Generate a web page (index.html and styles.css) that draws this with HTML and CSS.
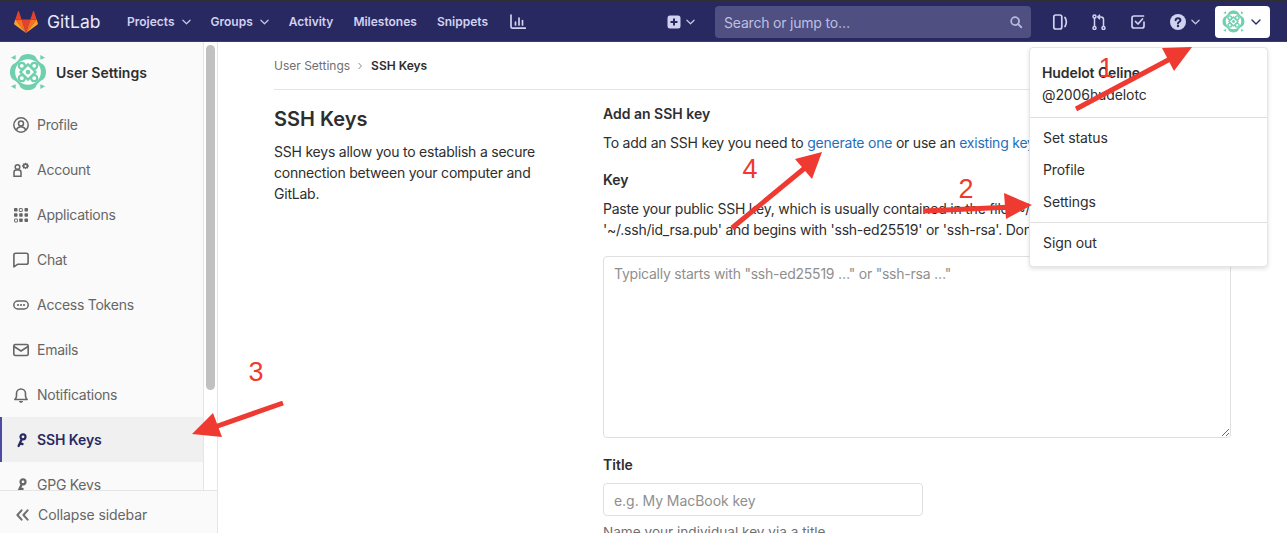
FILE: index.html
```html
<!DOCTYPE html>
<html lang="en">
<head>
<meta charset="utf-8">
<title>SSH Keys · User Settings · GitLab</title>
<link rel="stylesheet" href="styles.css">
</head>
<body>
<svg class="defs" width="0" height="0" aria-hidden="true">
  <symbol id="avatar" viewBox="0 0 40 40">
    <path fill="#6fd0ae" d="M12 4C16 0 24 0 28 4C29 7 33 11 36 12C40 16 40 24 36 28C33 29 29 33 28 36C24 40 16 40 12 36C11 33 7 29 4 28C0 24 0 16 4 12C7 11 11 7 12 4Z"/>
    <path fill="#6fd0ae" d="M2 5L7 2L7 7zM38 5L33 2L33 7zM2 35L7 38L7 33zM38 35L33 38L33 33z"/>
    <circle cx="20" cy="20" r="13.500" fill="#fff"/>
    <g fill="#fff" stroke="#6fd0ae" stroke-width="2.400">
      <path d="M20 12L28 20L20 28L12 20Z"/>
      <circle cx="13.500" cy="13.500" r="3.200"/><circle cx="26.500" cy="13.500" r="3.200"/><circle cx="13.500" cy="26.500" r="3.200"/><circle cx="26.500" cy="26.500" r="3.200"/>
    </g>
    <circle cx="20" cy="20" r="2.500" fill="#6fd0ae"/>
  </symbol>
  <symbol id="chev" viewBox="0 0 10 6"><path fill="none" stroke="currentColor" stroke-width="1.400" stroke-linecap="round" stroke-linejoin="round" d="M1 1l4 4 4-4"/></symbol>
  <symbol id="key" viewBox="0 0 16 16"><path fill="none" stroke="currentColor" stroke-width="2.300" stroke-linecap="round" d="M8.600 7.500L5.600 14M7 11.500L9.500 12"/><circle cx="10" cy="4.800" r="2.500" fill="none" stroke="currentColor" stroke-width="2.200"/></symbol>
</svg>

<header class="topbar">
  <a class="brand">
    <svg class="tanuki" viewBox="0 0 24 22" aria-hidden="true">
      <path fill="#e24329" d="M12 22l4.400-13.500H7.600z"/>
      <path fill="#fc6d26" d="M12 22L7.600 8.500H1.300z"/>
      <path fill="#fca326" d="M1.300 8.500L.1 12.600c-.1.400 0 .8.300 1L12 22z"/>
      <path fill="#e24329" d="M1.300 8.500h6.300L4.900.300c-.1-.4-.7-.4-.9 0z"/>
      <path fill="#fc6d26" d="M12 22l4.400-13.500h6.300z"/>
      <path fill="#fca326" d="M22.700 8.500l1.200 4.100c.1.400 0 .8-.3 1L12 22z"/>
      <path fill="#e24329" d="M22.700 8.500h-6.300L19.100.300c.1-.4.7-.4.900 0z"/>
    </svg>
    <span class="brand-name">GitLab</span>
  </a>
  <nav class="main-nav">
    <a class="nav-link">Projects <svg class="chev"><use href="#chev"/></svg></a>
    <a class="nav-link">Groups <svg class="chev"><use href="#chev"/></svg></a>
    <a class="nav-link">Activity</a>
    <a class="nav-link">Milestones</a>
    <a class="nav-link">Snippets</a>
    <svg class="nav-icon" viewBox="0 0 16 16" aria-hidden="true"><path fill="none" stroke="currentColor" stroke-width="1.700" stroke-linecap="round" stroke-linejoin="round" d="M1 1v11.700c0 1 .5 1.500 1.500 1.500h13M5.500 8v3M9 4v7M12.500 6.500V11"/></svg>
  </nav>
  <div class="top-right">
    <a class="new-btn">
      <svg class="nav-icon small" viewBox="0 0 14 14" aria-hidden="true"><rect width="13" height="13" x=".5" y=".5" rx="2.500" fill="currentColor"/><path stroke="#292961" stroke-width="2" d="M7 3.500v7M3.500 7h7"/></svg>
      <svg class="chev"><use href="#chev"/></svg>
    </a>
    <div class="search">
      <span>Search or jump to…</span>
      <svg class="search-icon" viewBox="0 0 16 16" aria-hidden="true"><circle cx="7" cy="7" r="4.500" fill="none" stroke="currentColor" stroke-width="2"/><path stroke="currentColor" stroke-width="2.200" stroke-linecap="round" d="M10.500 10.500L14 14"/></svg>
    </div>
    <svg class="tool-icon first" viewBox="0 0 16 16" aria-hidden="true"><rect x="1.800" y="1" width="8" height="14" rx="2" fill="none" stroke="currentColor" stroke-width="1.700"/><path fill="none" stroke="currentColor" stroke-width="1.700" stroke-linecap="round" d="M13 3.500c1.500 2.500 1.500 6.500 0 9"/></svg>
    <svg class="tool-icon" viewBox="0 0 16 16" aria-hidden="true"><g fill="none" stroke="currentColor" stroke-width="1.500"><circle cx="3.500" cy="2.500" r="1.500"/><circle cx="3.500" cy="14" r="1.500"/><circle cx="12.500" cy="14" r="1.500"/><path d="M3.500 4v8.500M12.500 12.500V5.500c0-1.500-1-2.500-2.500-2.500H7M9 .8L6.800 3 9 5.200"/></g></svg>
    <svg class="tool-icon" viewBox="0 0 16 16" aria-hidden="true"><path fill="none" stroke="currentColor" stroke-width="1.700" stroke-linecap="round" stroke-linejoin="round" d="M13.500 2H4C2.800 2 2 2.800 2 4v8c0 1.200.8 2 2 2h8c1.200 0 2-.8 2-2V8M5.500 7.500L8 10l4.500-5"/></svg>
    <a class="help">
      <svg class="help-icon" viewBox="0 0 16 16" aria-hidden="true"><circle cx="8" cy="8" r="8" fill="currentColor"/><path fill="none" stroke="#292961" stroke-width="2" stroke-linecap="round" d="M5.600 6.200C5.800 4.800 6.800 4.200 8 4.200c1.400 0 2.400.8 2.400 2 0 1.800-2.400 1.800-2.400 3.200"/><circle cx="8" cy="12" r="1.200" fill="#292961"/></svg>
      <svg class="chev"><use href="#chev"/></svg>
    </a>
    <a class="user-btn">
      <svg class="user-avatar"><use href="#avatar"/></svg>
      <svg class="chev dark"><use href="#chev"/></svg>
    </a>
  </div>
</header>

<div class="page">
  <aside class="sidebar">
    <div class="side-scroll">
      <div class="side-panel">
        <div class="context"><svg class="context-avatar"><use href="#avatar"/></svg><span>User Settings</span></div>
        <ul class="side-list">
          <li class="side-item"><svg class="side-icon" viewBox="0 0 16 16"><g fill="none" stroke="currentColor" stroke-width="1.500"><circle cx="8" cy="8" r="7.200"/><circle cx="8" cy="6.400" r="2.500"/><path d="M3.300 13c1-2.400 2.800-3.300 4.700-3.300s3.700.9 4.700 3.300"/></g></svg>Profile</li>
          <li class="side-item"><svg class="side-icon" viewBox="0 0 16 16"><g fill="none" stroke="currentColor" stroke-width="1.500"><circle cx="4.500" cy="5" r="2.300"/><path d="M1 14.200V10.500c0-1.500 1-2.500 2-2.500h3c1 0 2 1 2 2.500v3.700z"/></g><path fill="currentColor" fill-rule="evenodd" d="M12.500.5l1 1.100 1.500-.2.200 1.500 1.100 1-1.100 1-.2 1.500-1.500-.2-1 1.100-1-1.100-1.500.2-.2-1.500-1.100-1 1.100-1 .2-1.500 1.500.2zM12.500 3a1.100 1.100 0 1 0 0 2.200 1.100 1.100 0 0 0 0-2.200z"/></svg>Account</li>
          <li class="side-item"><svg class="side-icon" viewBox="0 0 16 16" fill="currentColor"><rect x="1" y="1" width="3.500" height="3.500" rx=".7"/><rect x="6.300" y="1.500" width="3" height="3" rx=".5" fill="none" stroke="currentColor"/><rect x="11.500" y="1" width="3.500" height="3.500" rx=".7"/><rect x="1" y="6.300" width="3.500" height="3.500" rx=".7"/><rect x="6.200" y="6.300" width="3.500" height="3.500" rx=".7"/><rect x="11.500" y="6.300" width="3.500" height="3.500" rx=".7"/><rect x="1.500" y="12" width="3" height="3" rx=".5" fill="none" stroke="currentColor"/><rect x="6.200" y="11.500" width="3.500" height="3.500" rx=".7"/><rect x="11.500" y="11.500" width="3.500" height="3.500" rx=".7"/></svg>Applications</li>
          <li class="side-item"><svg class="side-icon" viewBox="0 0 16 16"><path fill="none" stroke="currentColor" stroke-width="1.600" stroke-linejoin="round" d="M.9 14.800V3c0-1.100.7-1.800 1.800-1.800h10.600c1.100 0 1.800.7 1.800 1.800v7.500c0 1.100-.7 1.800-1.800 1.800H4.500z"/></svg>Chat</li>
          <li class="side-item"><svg class="side-icon" viewBox="0 0 16 16"><rect x=".8" y="4" width="14.400" height="8" rx="4" fill="none" stroke="currentColor" stroke-width="1.500"/><circle cx="5" cy="8" r="1.100" fill="currentColor"/><circle cx="8" cy="8" r="1.100" fill="currentColor"/><circle cx="11" cy="8" r="1.100" fill="currentColor"/></svg>Access Tokens</li>
          <li class="side-item"><svg class="side-icon" viewBox="0 0 16 16"><rect x=".8" y="2.500" width="14.400" height="11" rx="1.500" fill="none" stroke="currentColor" stroke-width="1.600"/><path fill="none" stroke="currentColor" stroke-width="1.600" d="M1 4.500l7 4.500 7-4.500"/></svg>Emails</li>
          <li class="side-item"><svg class="side-icon" viewBox="0 0 16 16"><path fill="none" stroke="currentColor" stroke-width="1.600" stroke-linejoin="round" d="M1.800 12.500h12.400c-1.200-1-1.700-2-1.700-3.500V6.500c0-2.500-2-4.500-4.500-4.500s-4.500 2-4.500 4.500V9c0 1.500-.5 2.500-1.700 3.500z"/><path fill="currentColor" d="M6 14h4c0 1-1 1.800-2 1.800S6 15 6 14z"/></svg>Notifications</li>
          <li class="side-item active"><svg class="side-icon"><use href="#key"/></svg>SSH Keys</li>
          <li class="side-item"><svg class="side-icon"><use href="#key"/></svg>GPG Keys</li>
        </ul>
      </div>
      <div class="scrollbar"><div class="thumb"></div></div>
    </div>
    <div class="collapse">
      <svg class="collapse-icon" viewBox="0 0 14 12" aria-hidden="true"><path fill="none" stroke="currentColor" stroke-width="2.200" stroke-linecap="round" stroke-linejoin="round" d="M6 1L1.500 6 6 11M12.500 1L8 6l4.500 5"/></svg>
      Collapse sidebar
    </div>
  </aside>

  <main class="content">
    <div class="crumbs">
      <a class="crumb">User Settings</a>
      <svg class="crumb-sep" viewBox="0 0 6 8" aria-hidden="true"><path fill="none" stroke="currentColor" d="M1.500 1l3 3-3 3"/></svg>
      <strong>SSH Keys</strong>
    </div>
    <div class="columns">
      <section class="intro">
        <h1>SSH Keys</h1>
        <p>SSH keys allow you to establish a secure connection between your computer and GitLab.</p>
      </section>
      <section class="form">
        <h2>Add an SSH key</h2>
        <p class="lead">To add an SSH key you need to <a>generate one</a> or use an <a>existing key</a>.</p>
        <label class="label key-label">Key</label>
        <p class="help-text">Paste your public SSH key, which is usually contained in the file '~/.ssh/id_ed25519.pub' or<br>'~/.ssh/id_rsa.pub' and begins with 'ssh-ed25519' or 'ssh-rsa'. Don't use your private SSH key.</p>
        <textarea class="key-box" placeholder="Typically starts with &quot;ssh-ed25519 …&quot; or &quot;ssh-rsa …&quot;"></textarea>
        <label class="label title-label">Title</label>
        <input class="title-box" type="text" placeholder="e.g. My MacBook key">
        <p class="hint">Name your individual key via a title</p>
      </section>
    </div>
  </main>
</div>

<div class="user-menu">
  <div class="menu-head"><strong>Hudelot Celine</strong><span>@2006hudelotc</span></div>
  <div class="menu-group">
    <a>Set status</a>
    <a>Profile</a>
    <a>Settings</a>
  </div>
  <div class="menu-group last"><a>Sign out</a></div>
</div>

<svg class="annotations" viewBox="0 0 1287 533" aria-hidden="true">
  <g fill="#ee3a31" stroke="#ee3a31" stroke-width="5">
    <path d="M1076 109L1172 58"/>
    <path stroke="none" d="M1192 47L1162 48L1174 71z"/>
    <path d="M924 211L1012 207"/>
    <path stroke="none" d="M1032 205L1004 193L1006 219z"/>
    <path d="M283 403L212 428"/>
    <path stroke="none" d="M192 434L213 413L222 437z"/>
    <path d="M732 228L806 167"/>
    <path stroke="none" d="M822 152L795 159L812 179z"/>
  </g>
  <g class="anno-num">
    <text x="1106" y="77" text-anchor="middle">1</text>
    <text x="966" y="198" text-anchor="middle">2</text>
    <text x="256" y="381" text-anchor="middle">3</text>
    <text x="750" y="178" text-anchor="middle">4</text>
  </g>
</svg>
</body>
</html>
```
FILE: styles.css
```css
* { box-sizing: border-box; }
html, body { margin: 0; height: 533px; overflow: hidden; }
body { font-family: Inter, "Liberation Sans", sans-serif; font-size: 14px; color: #2e2e2e; background: #fff; position: relative; }
a { text-decoration: none; color: inherit; }
ul { list-style: none; margin: 0; padding: 0; }
.defs { position: absolute; }

.topbar { height: 42px; background: #292961; border-top: 2px solid #2f2f33; border-bottom: 1px solid #3b3b6e; display: flex; align-items: center; color: #d1d1f0; }
.brand { display: flex; align-items: center; margin-left: 14px; width: 113px; }
.tanuki { width: 24px; height: 22px; }
.brand-name { margin-left: 9px; font-size: 17.500px; color: #e8e8f8; }
.main-nav { display: flex; align-items: center; gap: 20px; }
.nav-link { font-size: 12px; font-weight: 600; display: flex; align-items: center; gap: 7px; }
.chev { width: 9px; height: 6px; color: #c4c4e4; flex: none; }
.chev.dark { color: #292961; width: 10px; }
.nav-icon { width: 16px; height: 16px; margin-left: 2px; color: #d1d1f0; }
.nav-icon.small { width: 14px; height: 14px; margin: 0; }
.top-right { margin-left: auto; display: flex; align-items: center; margin-right: 17px; }
.new-btn { display: flex; align-items: center; gap: 5px; margin-right: 20px; }
.search { width: 316px; height: 32px; background: #4f4f82; border-radius: 4px; display: flex; align-items: center; justify-content: space-between; padding: 1px 8px 0 9px; font-size: 14px; color: #bfbfe0; letter-spacing: -.2px; }
.search-icon { width: 14px; height: 14px; color: #b8b8da; }
.tool-icon { width: 16px; height: 16px; margin-left: 23px; color: #d1d1f0; }
.tool-icon.first { margin-left: 21px; }
.help { display: flex; align-items: center; gap: 5px; margin-left: 24px; margin-right: 15px; }
.help-icon { width: 16px; height: 16px; color: #d1d1f0; }
.user-btn { width: 55px; height: 32px; background: #fff; border-radius: 4px; display: flex; align-items: center; padding-left: 7px; gap: 6px; }
.user-avatar { width: 23px; height: 23px; }

.page { display: flex; height: 491px; }
.sidebar { width: 218px; flex: none; border-right: 1px solid #e5e5e5; background: #fff; display: flex; flex-direction: column; height: 491px; }
.side-scroll { flex: 1; min-height: 0; display: flex; overflow: hidden; }
.side-panel { width: 204px; flex: none; background: #fafafa; border-right: 1px solid #e5e5e5; }
.context { height: 60px; display: flex; align-items: center; padding-left: 9px; gap: 9px; font-weight: 600; font-size: 14px; color: #2e2e2e; }
.context-avatar { width: 38px; height: 38px; }
.side-item { height: 45px; display: flex; align-items: center; gap: 8px; padding-left: 13px; font-size: 14px; color: #666; letter-spacing: -.25px; }
.side-icon { width: 16px; height: 16px; flex: none; color: #666; }
.side-item.active { background: #f0f0f0; color: #292961; font-weight: 600; box-shadow: inset 2px 0 0 #4b4ba3; letter-spacing: -.1px; }
.side-item.active .side-icon { color: #292961; }
.scrollbar { flex: 1; padding: 3px 2px 0; background: #fff; }
.thumb { width: 9px; height: 345px; background: #c1c1c1; border-radius: 5px; }
.collapse { height: 43px; flex: none; display: flex; align-items: center; gap: 9px; padding: 5px 0 0 16px; border-top: 1px solid #e5e5e5; background: #fafafa; font-size: 14px; color: #666; letter-spacing: -.1px; }
.collapse-icon { width: 13px; height: 12px; color: #707070; }

.content { width: 1069px; padding-left: 56px; }
.crumbs { width: 957px; height: 48px; border-bottom: 1px solid #e5e5e5; display: flex; align-items: center; font-size: 12px; color: #707070; }
.crumb-sep { width: 6px; height: 8px; margin: 0 8px 0 7px; color: #8a8a8a; }
.crumbs strong { color: #2e2e2e; font-weight: 600; }
.columns { display: grid; grid-template-columns: 329px 628px; letter-spacing: -.22px; }
.intro h1 { margin: 16px 0 0; font-size: 20px; line-height: 26px; font-weight: 600; color: #2e2e2e; letter-spacing: 0; }
.intro p { margin: 9px 0 0; width: 272px; line-height: 21px; }
.form h2 { margin: 15px 0 0; font-size: 14px; line-height: 18px; font-weight: 600; letter-spacing: 0; }
.lead { margin: 9px 0 0; line-height: 21px; white-space: nowrap; }
.lead a { color: #1f6fb9; }
.label { display: block; font-weight: 600; line-height: 18px; letter-spacing: 0; }
.key-label { margin-top: 18px; }
.help-text { margin: 9px 0 0; line-height: 21px; white-space: nowrap; }
.key-box { display: block; width: 628px; height: 182px; margin-top: 16px; border: 1px solid #dfdfdf; border-radius: 4px; padding: 6px 10px; font: 14px/21px Inter, "Liberation Sans", sans-serif; letter-spacing: -.23px; color: #2e2e2e; outline: 0; }
.title-label { margin-top: 18px; }
.title-box { display: block; width: 320px; height: 33px; margin-top: 9px; border: 1px solid #dfdfdf; border-radius: 4px; padding: 2px 10px 0; font: 14px Inter, "Liberation Sans", sans-serif; letter-spacing: -.05px; outline: 0; }
::placeholder { color: #8f8f8f; opacity: 1; }
.hint { margin: 8px 0 0; line-height: 17px; font-size: 13.600px; color: #707070; white-space: nowrap; letter-spacing: 0; }

.user-menu { position: absolute; left: 1029px; top: 47px; width: 239px; height: 220px; background: #fff; border: 1px solid #e5e5e5; border-radius: 4px; box-shadow: 0 2px 4px rgba(0,0,0,.12); font-size: 14px; color: #2e2e2e; letter-spacing: -.1px; }
.menu-head { height: 70px; border-bottom: 1px solid #e0e0e0; padding: 16px 12px 0; display: flex; flex-direction: column; gap: 5px; line-height: 17px; }
.menu-head strong { font-weight: 600; }
.menu-group { display: flex; flex-direction: column; padding: 4px 0; border-bottom: 1px solid #e0e0e0; }
.menu-group a { height: 32px; line-height: 32px; padding-left: 13px; }
.menu-group.last { border: 0; }

.annotations { position: absolute; left: 0; top: 0; width: 1287px; height: 533px; pointer-events: none; }
.anno-num { font-family: "Liberation Sans", sans-serif; font-size: 27px; fill: #ee3a31; }
```
